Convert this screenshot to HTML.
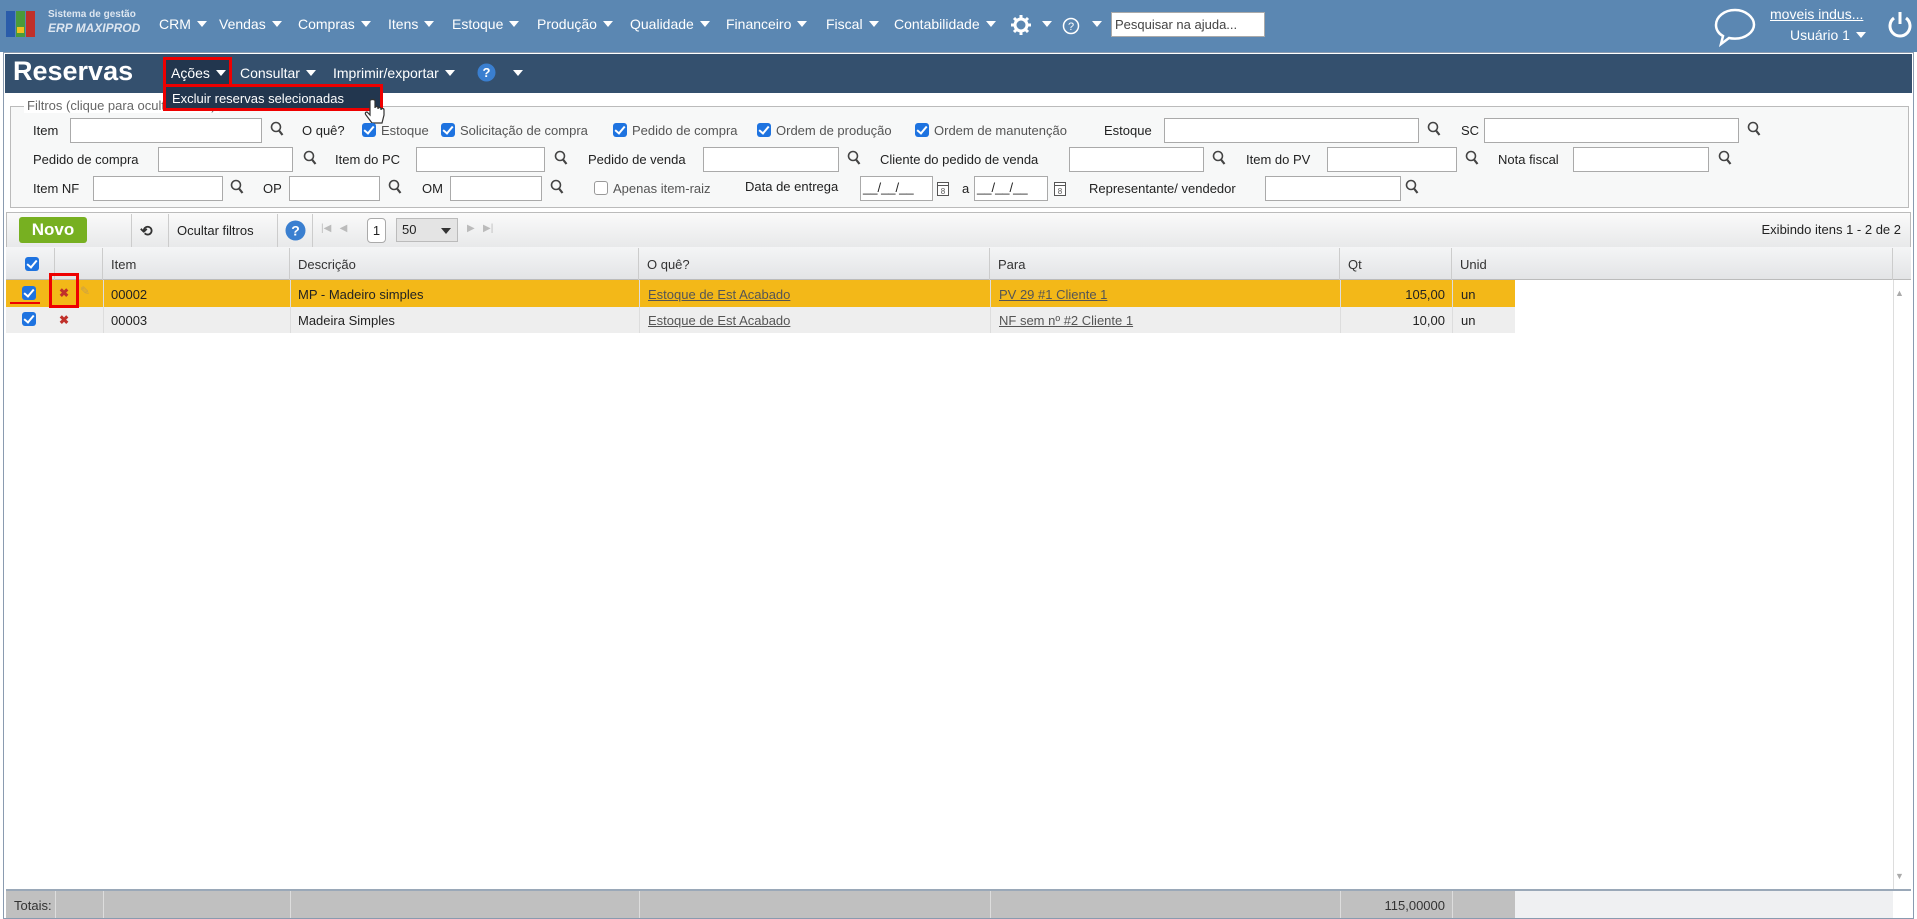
<!DOCTYPE html>
<html><head><meta charset="utf-8"><style>
*{box-sizing:border-box;margin:0;padding:0}
body{width:1917px;height:919px;overflow:hidden;background:#fff;font-family:"Liberation Sans",Arial,sans-serif;font-size:14px;color:#222;position:relative}
.a{position:absolute;white-space:nowrap}
.top{position:absolute;left:0;top:0;width:1917px;height:52px;background:#5b87b2}
.mi{position:absolute;top:16px;color:#fff;font-size:14px}
.tri{display:inline-block;width:0;height:0;border-left:5px solid transparent;border-right:5px solid transparent;border-top:6px solid #fff;margin-left:6px;vertical-align:2px}
.frame{position:absolute;left:3px;top:52px;width:1911px;height:867px;border:1px solid #8a9bb0;background:#fff}
.tb{position:absolute;left:5px;top:54px;width:1907px;height:39px;background:#34506e}
.inp{position:absolute;height:25px;border:1px solid #aaa;background:#fff}
.lbl{position:absolute;font-size:13px;color:#222}
.gl{position:absolute;color:#555;font-size:13px}
.cb{position:absolute;width:14px;height:14px;border-radius:3px;background:#1e73e0}
.cb:after{content:"";position:absolute;left:4px;top:1px;width:4px;height:8px;border:solid #fff;border-width:0 2px 2px 0;transform:rotate(40deg)}
.mag{position:absolute;width:14px;height:16px}
.col{position:absolute;top:248px;height:32px;border-right:1px solid #ccc;font-size:13px;padding:9px 8px;color:#333}
.cell{position:absolute;font-size:13px}
u{color:#555}
</style></head><body>
<div class="top"></div>
<svg class="a" style="left:6px;top:9px" width="30" height="30"><rect x="0" y="2" width="9" height="26" fill="#2a5caa"/><rect x="10" y="2" width="9" height="26" fill="#4a9a3a"/><rect x="20" y="2" width="9" height="26" fill="#c0302a"/><rect x="11" y="18" width="7" height="6" fill="#f0c020"/></svg>
<div class="a" style="left:48px;top:9px;color:#dde6f0;font-size:10px;font-weight:bold">Sistema de gestão</div>
<div class="a" style="left:48px;top:21px;color:#dde6f0;font-size:12px;font-weight:bold;font-style:italic">ERP MAXIPROD</div>
<div class="mi" style="left:159px">CRM<span class="tri"></span></div>
<div class="mi" style="left:219px">Vendas<span class="tri"></span></div>
<div class="mi" style="left:298px">Compras<span class="tri"></span></div>
<div class="mi" style="left:388px">Itens<span class="tri"></span></div>
<div class="mi" style="left:452px">Estoque<span class="tri"></span></div>
<div class="mi" style="left:537px">Produção<span class="tri"></span></div>
<div class="mi" style="left:630px">Qualidade<span class="tri"></span></div>
<div class="mi" style="left:726px">Financeiro<span class="tri"></span></div>
<div class="mi" style="left:826px">Fiscal<span class="tri"></span></div>
<div class="mi" style="left:894px">Contabilidade<span class="tri"></span></div>
<svg class="a" style="left:1010px;top:14px" width="22" height="22" viewBox="0 0 22 22"><circle cx="11" cy="11" r="6" fill="none" stroke="#fff" stroke-width="3"/><g stroke="#fff" stroke-width="3"><line x1="11" y1="1" x2="11" y2="5"/><line x1="11" y1="17" x2="11" y2="21"/><line x1="1" y1="11" x2="5" y2="11"/><line x1="17" y1="11" x2="21" y2="11"/><line x1="4" y1="4" x2="7" y2="7"/><line x1="15" y1="15" x2="18" y2="18"/><line x1="18" y1="4" x2="15" y2="7"/><line x1="4" y1="18" x2="7" y2="15"/></g></svg>
<div class="mi" style="left:1036px"><span class="tri"></span></div>
<svg class="a" style="left:1062px;top:17px" width="18" height="18"><circle cx="9" cy="9" r="7.5" fill="none" stroke="#fff" stroke-width="1.5"/><text x="9" y="13" font-size="11" fill="#fff" text-anchor="middle" font-family="Liberation Sans">?</text></svg>
<div class="mi" style="left:1086px"><span class="tri"></span></div>
<div class="a" style="left:1111px;top:12px;width:154px;height:25px;background:#fff;border:1px solid #aaa;font-size:13px;color:#444;padding:4px 3px">Pesquisar na ajuda...</div>
<svg class="a" style="left:1712px;top:7px" width="46" height="40"><path d="M23 3C12 3 4 10 4 18c0 5 3 9 7 11l-2 8 8-6c2 .5 4 .6 6 .6 11 0 19-7 19-14S34 3 23 3z" fill="none" stroke="#fff" stroke-width="2.5"/></svg>
<div class="a" style="left:1770px;top:6px;color:#fff;font-size:14px;text-decoration:underline">moveis indus...</div>
<div class="a" style="left:1790px;top:27px;color:#fff;font-size:14px">Usuário 1<span class="tri"></span></div>
<svg class="a" style="left:1886px;top:10px" width="28" height="30"><path d="M8 8a10 10 0 1 0 12 0" fill="none" stroke="#fff" stroke-width="3"/><line x1="14" y1="2" x2="14" y2="14" stroke="#fff" stroke-width="3"/></svg>

<div class="frame"></div>
<div class="tb"></div>
<div class="a" style="left:13px;top:56px;color:#fff;font-size:27px;font-weight:bold">Reservas</div>
<div class="a" style="left:163px;top:57px;width:69px;height:33px;border:3px solid #e00;background:#22364e"></div>
<div class="a" style="left:171px;top:65px;color:#fff;font-size:14px">Ações<span class="tri"></span></div>
<div class="a" style="left:240px;top:65px;color:#fff;font-size:14px">Consultar<span class="tri"></span></div>
<div class="a" style="left:333px;top:65px;color:#fff;font-size:14px">Imprimir/exportar<span class="tri"></span></div>
<svg class="a" style="left:477px;top:63px" width="19" height="19"><circle cx="9.5" cy="9.5" r="9" fill="#3a7fd0"/><text x="9.5" y="14" font-size="13" font-weight="bold" fill="#fff" text-anchor="middle" font-family="Liberation Sans">?</text></svg>
<div class="a" style="left:507px;top:65px"><span class="tri"></span></div>
<div class="a" style="left:163px;top:84px;width:220px;height:27px;border:3px solid #e00;background:#22364e;color:#fff;font-size:13px;padding:4px 6px">Excluir reservas selecionadas</div>
<svg class="a" style="left:364px;top:98px" width="22" height="30"><path d="M6 3v14l-3-3c-2 0-2 2-1 3l6 8h10l2-8v-5c0-2-3-2-3 0v-1c0-2-3-2-3 0v-1c0-2-3-2-3 0V3c0-2-5-2-5 0z" fill="#fff" stroke="#333" stroke-width="1.2"/></svg>

<!-- filters -->
<div class="a" style="left:10px;top:106px;width:1899px;height:102px;border:1px solid #bbb;background:#f7f8f8"></div>
<div class="a" style="left:24px;top:98px;background:#fff;padding:0 3px;font-size:13px;color:#666">Filtros (clique para ocultar/exibir)</div>
<div class="a" style="left:163px;top:84px;width:220px;height:27px;border:3px solid #e00;background:#22364e;color:#fff;font-size:13px;padding:4px 6px">Excluir reservas selecionadas</div>
<svg class="a" style="left:364px;top:98px" width="22" height="30"><path d="M6 3v14l-3-3c-2 0-2 2-1 3l6 8h10l2-8v-5c0-2-3-2-3 0v-1c0-2-3-2-3 0v-1c0-2-3-2-3 0V3c0-2-5-2-5 0z" fill="#fff" stroke="#333" stroke-width="1.2"/></svg>

<div class="lbl" style="left:33px;top:123px">Item</div><div class="inp" style="left:70px;top:118px;width:192px"></div>
<div class="lbl" style="left:302px;top:123px">O quê?</div>
<div class="cb" style="left:362px;top:123px"></div><div class="gl" style="left:381px;top:123px">Estoque</div>
<div class="cb" style="left:441px;top:123px"></div><div class="gl" style="left:460px;top:123px">Solicitação de compra</div>
<div class="cb" style="left:613px;top:123px"></div><div class="gl" style="left:632px;top:123px">Pedido de compra</div>
<div class="cb" style="left:757px;top:123px"></div><div class="gl" style="left:776px;top:123px">Ordem de produção</div>
<div class="cb" style="left:915px;top:123px"></div><div class="gl" style="left:934px;top:123px">Ordem de manutenção</div>
<div class="lbl" style="left:1104px;top:123px">Estoque</div><div class="inp" style="left:1164px;top:118px;width:255px"></div>
<div class="lbl" style="left:1461px;top:123px">SC</div><div class="inp" style="left:1484px;top:118px;width:255px"></div>

<div class="lbl" style="left:33px;top:152px">Pedido de compra</div><div class="inp" style="left:158px;top:147px;width:135px"></div>
<div class="lbl" style="left:335px;top:152px">Item do PC</div><div class="inp" style="left:416px;top:147px;width:129px"></div>
<div class="lbl" style="left:588px;top:152px">Pedido de venda</div><div class="inp" style="left:703px;top:147px;width:136px"></div>
<div class="lbl" style="left:880px;top:152px">Cliente do pedido de venda</div><div class="inp" style="left:1069px;top:147px;width:135px"></div>
<div class="lbl" style="left:1246px;top:152px">Item do PV</div><div class="inp" style="left:1327px;top:147px;width:130px"></div>
<div class="lbl" style="left:1498px;top:152px">Nota fiscal</div><div class="inp" style="left:1573px;top:147px;width:136px"></div>

<div class="lbl" style="left:33px;top:181px">Item NF</div><div class="inp" style="left:93px;top:176px;width:130px"></div>
<div class="lbl" style="left:263px;top:181px">OP</div><div class="inp" style="left:289px;top:176px;width:91px"></div>
<div class="lbl" style="left:422px;top:181px">OM</div><div class="inp" style="left:450px;top:176px;width:92px"></div>
<div class="a" style="left:594px;top:181px;width:14px;height:14px;border:1px solid #999;border-radius:3px;background:#fff"></div>
<div class="gl" style="left:613px;top:181px">Apenas item-raiz</div>
<div class="lbl" style="left:745px;top:179px">Data de entrega</div>
<div class="inp" style="left:860px;top:176px;width:73px;font-size:13px;padding:3px 2px">__/__/__</div>
<div class="lbl" style="left:962px;top:181px">a</div>
<div class="inp" style="left:974px;top:176px;width:74px;font-size:13px;padding:3px 2px">__/__/__</div>
<div class="lbl" style="left:1089px;top:181px">Representante/ vendedor</div><div class="inp" style="left:1265px;top:176px;width:136px"></div>

<!-- magnifiers -->
<svg width="0" height="0" style="position:absolute"><defs><g id="m"><circle cx="6" cy="6" r="4.5" fill="none" stroke="#444" stroke-width="1.6"/><line x1="9" y1="9.5" x2="12.5" y2="14" stroke="#444" stroke-width="2.2"/></g><g id="cal"><rect x="1.5" y="2.5" width="11" height="13" fill="#fff" stroke="#555"/><line x1="1.5" y1="5.5" x2="12.5" y2="5.5" stroke="#555"/><text x="7" y="14" font-size="8" text-anchor="middle" fill="#555" font-family="Liberation Sans">8</text></g></defs></svg>
<svg class="mag" style="left:270px;top:121px"><use href="#m"/></svg>
<svg class="mag" style="left:1427px;top:121px"><use href="#m"/></svg>
<svg class="mag" style="left:1747px;top:121px"><use href="#m"/></svg>
<svg class="mag" style="left:303px;top:150px"><use href="#m"/></svg>
<svg class="mag" style="left:554px;top:150px"><use href="#m"/></svg>
<svg class="mag" style="left:847px;top:150px"><use href="#m"/></svg>
<svg class="mag" style="left:1212px;top:150px"><use href="#m"/></svg>
<svg class="mag" style="left:1465px;top:150px"><use href="#m"/></svg>
<svg class="mag" style="left:1718px;top:150px"><use href="#m"/></svg>
<svg class="mag" style="left:230px;top:179px"><use href="#m"/></svg>
<svg class="mag" style="left:388px;top:179px"><use href="#m"/></svg>
<svg class="mag" style="left:550px;top:179px"><use href="#m"/></svg>
<svg class="mag" style="left:1405px;top:179px"><use href="#m"/></svg>
<svg class="a" style="left:936px;top:180px" width="14" height="18"><use href="#cal"/></svg>
<svg class="a" style="left:1053px;top:180px" width="14" height="18"><use href="#cal"/></svg>

<!-- toolbar -->
<div class="a" style="left:6px;top:212px;width:1905px;height:36px;border:1px solid #bbb;background:linear-gradient(#fafafa,#e8e9ea)"></div>
<div class="a" style="left:19px;top:217px;width:68px;height:26px;background:#77b021;border-radius:3px;color:#fff;font-weight:bold;font-size:17px;text-align:center;line-height:26px">Novo</div>
<div class="a" style="left:131px;top:214px;width:1px;height:33px;background:#ccc"></div>
<div class="a" style="left:140px;top:222px;font-size:15px;font-weight:bold;color:#333">⟲</div>
<div class="a" style="left:168px;top:214px;width:1px;height:33px;background:#ccc"></div>
<div class="lbl" style="left:177px;top:223px">Ocultar filtros</div>
<div class="a" style="left:277px;top:214px;width:1px;height:33px;background:#ccc"></div>
<svg class="a" style="left:285px;top:220px" width="21" height="21"><circle cx="10.5" cy="10.5" r="10" fill="#3a7fd0"/><text x="10.5" y="15.5" font-size="14" font-weight="bold" fill="#fff" text-anchor="middle" font-family="Liberation Sans">?</text></svg>
<div class="a" style="left:312px;top:214px;width:1px;height:33px;background:#ccc"></div>
<div class="a" style="left:321px;top:223px;color:#bbb;font-size:10px">|◀ &nbsp; ◀</div>
<div class="a" style="left:367px;top:218px;width:19px;height:25px;border:1px solid #aaa;border-radius:4px;background:#fff;font-size:13px;text-align:center;line-height:23px">1</div>
<div class="a" style="left:396px;top:218px;width:62px;height:24px;border:1px solid #bbb;background:#e4e4e4;font-size:13px;padding:3px 5px">50<span style="position:absolute;right:6px;top:9px;border-left:5px solid transparent;border-right:5px solid transparent;border-top:6px solid #333"></span></div>
<div class="a" style="left:467px;top:223px;color:#bbb;font-size:10px">▶ &nbsp; ▶|</div>
<div class="lbl" style="right:16px;top:222px">Exibindo itens 1 - 2 de 2</div>

<!-- grid header -->
<div class="a" style="left:6px;top:247px;width:1905px;height:33px;background:linear-gradient(#f4f5f6,#e3e4e6);border-bottom:1px solid #bbb"></div>
<div class="col" style="left:6px;width:49px"></div>
<div class="cb" style="left:25px;top:257px"></div>
<div class="col" style="left:55px;width:48px"></div>
<div class="col" style="left:103px;width:187px">Item</div>
<div class="col" style="left:290px;width:349px">Descrição</div>
<div class="col" style="left:639px;width:351px">O quê?</div>
<div class="col" style="left:990px;width:350px">Para</div>
<div class="col" style="left:1340px;width:112px">Qt</div>
<div class="col" style="left:1452px;width:441px">Unid</div>

<!-- rows -->
<div class="a" style="left:6px;top:280px;width:1509px;height:27px;background:#f3b818"></div>
<div class="a" style="left:6px;top:307px;width:1509px;height:26px;background:#eeeeee"></div>
<div class="cb" style="left:22px;top:286px"></div>
<div class="cb" style="left:22px;top:312px"></div>
<div class="a" style="left:10px;top:302px;width:30px;height:2px;background:#e00"></div>
<div class="a" style="left:49px;top:273px;width:30px;height:35px;border:3px solid #e00"></div>
<div class="a" style="left:59px;top:286px;color:#c0302a;font-size:12px;font-weight:bold">✖</div>
<div class="a" style="left:80px;top:284px;color:#c8a04a;font-size:12px">✎</div>
<div class="a" style="left:59px;top:313px;color:#c0302a;font-size:12px;font-weight:bold">✖</div>
<div class="a" style="left:103px;top:280px;width:1px;height:53px;background:#ddd"></div>
<div class="a" style="left:290px;top:280px;width:1px;height:53px;background:#ddd"></div>
<div class="a" style="left:639px;top:280px;width:1px;height:53px;background:#ddd"></div>
<div class="a" style="left:990px;top:280px;width:1px;height:53px;background:#ddd"></div>
<div class="a" style="left:1340px;top:280px;width:1px;height:53px;background:#ddd"></div>
<div class="a" style="left:1452px;top:280px;width:1px;height:53px;background:#ddd"></div>
<div class="cell a" style="left:111px;top:287px">00002</div>
<div class="cell a" style="left:298px;top:287px">MP - Madeiro simples</div>
<div class="cell a" style="left:648px;top:287px"><u>Estoque de Est Acabado</u></div>
<div class="cell a" style="left:999px;top:287px"><u>PV 29 #1 Cliente 1</u></div>
<div class="cell a" style="left:1340px;width:105px;text-align:right;top:287px">105,00</div>
<div class="cell a" style="left:1461px;top:287px">un</div>
<div class="cell a" style="left:111px;top:313px">00003</div>
<div class="cell a" style="left:298px;top:313px">Madeira Simples</div>
<div class="cell a" style="left:648px;top:313px"><u>Estoque de Est Acabado</u></div>
<div class="cell a" style="left:999px;top:313px"><u>NF sem nº #2 Cliente 1</u></div>
<div class="cell a" style="left:1340px;width:105px;text-align:right;top:313px">10,00</div>
<div class="cell a" style="left:1461px;top:313px">un</div>
<div class="a" style="left:1895px;top:288px;color:#aaa;font-size:9px">▲</div>
<div class="a" style="left:1895px;top:871px;color:#aaa;font-size:9px">▼</div>
<div class="a" style="left:1893px;top:280px;width:1px;height:610px;background:#ddd"></div>

<!-- totals -->
<div class="a" style="left:6px;top:889px;width:1905px;height:2px;background:#9aa8b8"></div>
<div class="a" style="left:6px;top:891px;width:1509px;height:27px;background:#c0c0c0"></div>
<div class="a" style="left:1515px;top:891px;width:378px;height:27px;background:#eff0f2"></div>
<div class="a" style="left:55px;top:891px;width:1px;height:27px;background:#ddd"></div>
<div class="a" style="left:103px;top:891px;width:1px;height:27px;background:#ddd"></div>
<div class="a" style="left:290px;top:891px;width:1px;height:27px;background:#ddd"></div>
<div class="a" style="left:639px;top:891px;width:1px;height:27px;background:#ddd"></div>
<div class="a" style="left:990px;top:891px;width:1px;height:27px;background:#ddd"></div>
<div class="a" style="left:1340px;top:891px;width:1px;height:27px;background:#ddd"></div>
<div class="a" style="left:1452px;top:891px;width:1px;height:27px;background:#ddd"></div>
<div class="cell a" style="left:14px;top:898px;color:#333">Totais:</div>
<div class="cell a" style="left:1340px;width:105px;text-align:right;top:898px;color:#333">115,00000</div>
</body></html>
